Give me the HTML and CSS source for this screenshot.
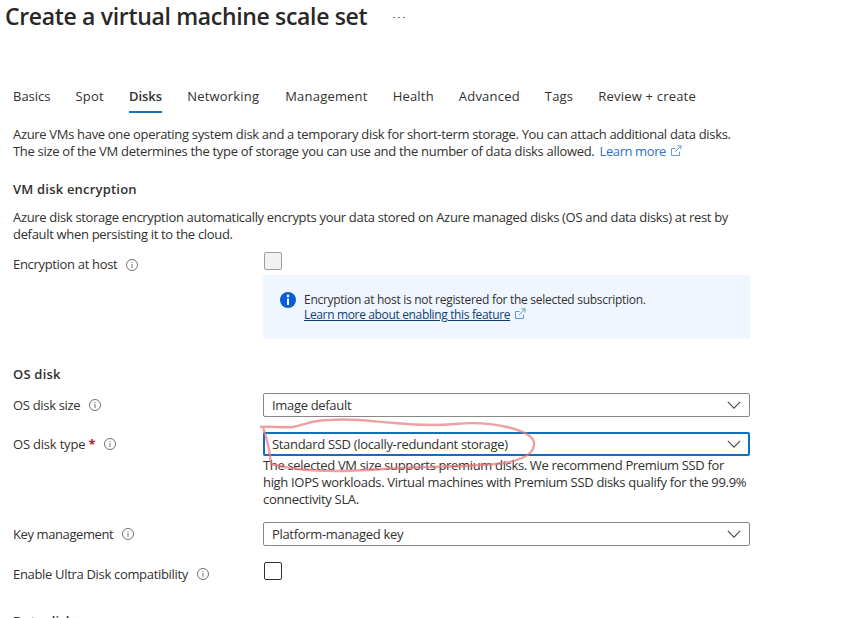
FILE: index.html
```html
<!DOCTYPE html>
<html lang="en">
<head>
<meta charset="utf-8">
<title>Create a virtual machine scale set</title>
<link rel="stylesheet" href="styles.css">
</head>
<body>
<svg class="defs" width="0" height="0" aria-hidden="true">
  <symbol id="info" viewBox="0 0 12 12"><circle cx="6" cy="6" r="5.5" fill="none" stroke="currentColor"/><path d="M6 5v4M6 3v1.1" fill="none" stroke="currentColor"/></symbol>
  <symbol id="ext" viewBox="0 0 12 12"><path d="M5.5 3.5h-4v7h8v-4M7.5 .9H11v3.5M11 .9L5 7" fill="none" stroke="currentColor" stroke-width=".9"/></symbol>
  <symbol id="chev" viewBox="0 0 14 8"><path d="M.8.9L7 7.1 13.2.9" fill="none" stroke="currentColor" stroke-width="1.1"/></symbol>
</svg>
<header class="header"><h1 class="title">Create a virtual machine scale set</h1><span class="more"><i></i><i></i><i></i></span></header>
<nav class="tabs">
  <a class="tab snug">Basics</a><a class="tab">Spot</a><a class="tab active">Disks</a><a class="tab net">Networking</a><a class="tab">Management</a><a class="tab">Health</a><a class="tab">Advanced</a><a class="tab">Tags</a><a class="tab">Review + create</a>
</nav>
<main class="main">
  <p class="text intro">Azure VMs have one operating system disk and a temporary disk for short-term storage. You can attach additional data disks.<br><span class="l2">The size of the VM determines the type of storage you can use and the number of data disks allowed.</span> <a class="link">Learn more</a><svg class="ext"><use href="#ext"/></svg></p>
  <h2 class="section">VM disk encryption</h2>
  <p class="text">Azure disk storage encryption automatically encrypts your data stored on Azure managed disks (OS and data disks) at rest by<br>default when persisting it to the cloud.</p>
  <div class="row host">
    <div class="label"><span>Encryption at host</span><svg class="info"><use href="#info"/></svg></div>
    <div class="field"><span class="check disabled"></span></div>
  </div>
  <div class="notice">
    <svg class="badge" viewBox="0 0 16 16"><circle cx="8" cy="8" r="8" fill="#0b5cd7"/><path d="M8 6.5V13" stroke="#fff" stroke-width="2"/><circle cx="8" cy="3.9" r="1.3" fill="#fff"/></svg>
    <div class="notice-text"><div>Encryption at host is not registered for the selected subscription.</div><div><a class="notice-link">Learn more about enabling this feature</a><svg class="ext"><use href="#ext"/></svg></div></div>
  </div>
  <h2 class="section os">OS disk</h2>
  <div class="row size">
    <div class="label"><span>OS disk size</span><svg class="info"><use href="#info"/></svg></div>
    <div class="field"><div class="select"><span>Image default</span><svg class="chev"><use href="#chev"/></svg></div></div>
  </div>
  <div class="row type">
    <div class="label"><span class="wide">OS disk type <b class="req">*</b></span><svg class="info"><use href="#info"/></svg></div>
    <div class="field"><div class="select focus"><span>Standard SSD (locally-redundant storage)</span><svg class="chev"><use href="#chev"/></svg></div>
      <p class="text help"><span class="l1">The selected VM size supports premium disks. We recommend Premium SSD for</span><br>high IOPS workloads. Virtual machines with Premium SSD disks qualify for the 99.9%<br>connectivity SLA.</p>
      <svg class="scribble" viewBox="255 415 285 60"><path d="M260 427C270 426 281 428 293 427C305 425 311 420 330 420C355 418 374 422 394 423C415 425 433 426 455 424C476 422 490 423 507 427C520 430 532 434 534 442C535 453 525 458 510 462C488 466 460 466 430 467C395 467 370 471 335 471C310 471 290 469 271 464C270 452 267 439 263 427"/></svg>
    </div>
  </div>
  <div class="row key">
    <div class="label"><span class="tight">Key management</span><svg class="info"><use href="#info"/></svg></div>
    <div class="field"><div class="select"><span>Platform-managed key</span><svg class="chev"><use href="#chev"/></svg></div></div>
  </div>
  <div class="row ultra">
    <div class="label"><span>Enable Ultra Disk compatibility</span><svg class="info"><use href="#info"/></svg></div>
    <div class="field"><span class="check"></span></div>
  </div>
  <h2 class="section data">Data disks</h2>
</main>
</body>
</html>
```
FILE: styles.css
```css
* { box-sizing: border-box; }
html { overflow: hidden; }
body { margin: 0; height: 618px; overflow: hidden; background: #fff; color: #323130; font: 13px/17px "Open Sans", "Noto Sans", sans-serif; letter-spacing: -0.32px; white-space: nowrap; }
h1, h2, p { margin: 0; }
.defs { position: absolute; }
.header { display: flex; align-items: center; height: 34px; padding-left: 5px; }
.title { width: 388px; font-size: 23px; line-height: 32px; margin-top: -2px; font-weight: 600; letter-spacing: -0.33px; color: #292827; }
.more { display: flex; gap: 3px; }
.more i { width: 2px; height: 1px; background: #777; }
.tabs { display: flex; gap: 25px; height: 79px; padding: 54px 0 0 13px; }
.tab { height: 25px; line-height: 17px; letter-spacing: 0.2px; }
.snug { letter-spacing: 0; }
.active { font-weight: 600; border-bottom: 2px solid #1a6fb0; letter-spacing: 0; }
.net { margin-right: 1px; }
.main { padding-left: 13px; }
.intro { padding-top: 13px; }
.text { line-height: 17px; }
.l1 { letter-spacing: -0.345px; }
.l2 { letter-spacing: -0.3px; }
.link { color: #2a72c8; margin-left: 2px; letter-spacing: -0.4px; }
.ext { width: 12px; height: 12px; margin-left: 4px; vertical-align: -1px; color: #4f8fe0; }
.section { margin: 21px 0 11px; font-size: 13px; line-height: 17px; font-weight: 600; letter-spacing: 0.2px; }
.row { display: flex; width: 737px; }
.label { width: 250px; display: flex; align-items: center; height: 24px; }
.info { width: 12px; height: 12px; margin-left: 9px; color: #73716f; }
.field { position: relative; width: 487px; }
.check { display: block; width: 18px; height: 18px; margin-left: 1px; border: 1px solid #323130; border-radius: 2px; }
.disabled { background: #f3f2f1; border-color: #a19f9d; }
.host { height: 32px; padding-top: 9px; }
.host .label { height: 25px; }
.notice { display: flex; width: 487px; height: 64px; margin-left: 250px; padding: 17px; background: #eff6ff; border-radius: 2px; }
.badge { width: 16px; height: 16px; }
.notice-text { margin-left: 8px; font-size: 12px; line-height: 15px; letter-spacing: -0.29px; }
.notice-link { color: #123f70; text-decoration: underline; letter-spacing: -0.35px; }
.os { margin: 27px 0 10px; }
.select { display: flex; align-items: center; justify-content: space-between; height: 24px; padding: 0 8px; border: 1px solid #8a8886; border-radius: 2px; }
.focus { border: 2px solid #106ebe; padding: 0 7px; }
.chev { width: 14px; height: 8px; color: #484644; }
.size { height: 39px; }
.type { height: 90px; }
.wide { letter-spacing: -0.2px; }
.tight { letter-spacing: -0.4px; }
.req { color: #a4262c; }
.help { margin-top: 1px; }
.scribble { position: absolute; left: -8px; top: -17px; width: 285px; height: 60px; fill: none; stroke: #e87878; stroke-opacity: .7; stroke-width: 2.4; }
.key { height: 40px; }
.data { margin: 27px 0 0; }
```
